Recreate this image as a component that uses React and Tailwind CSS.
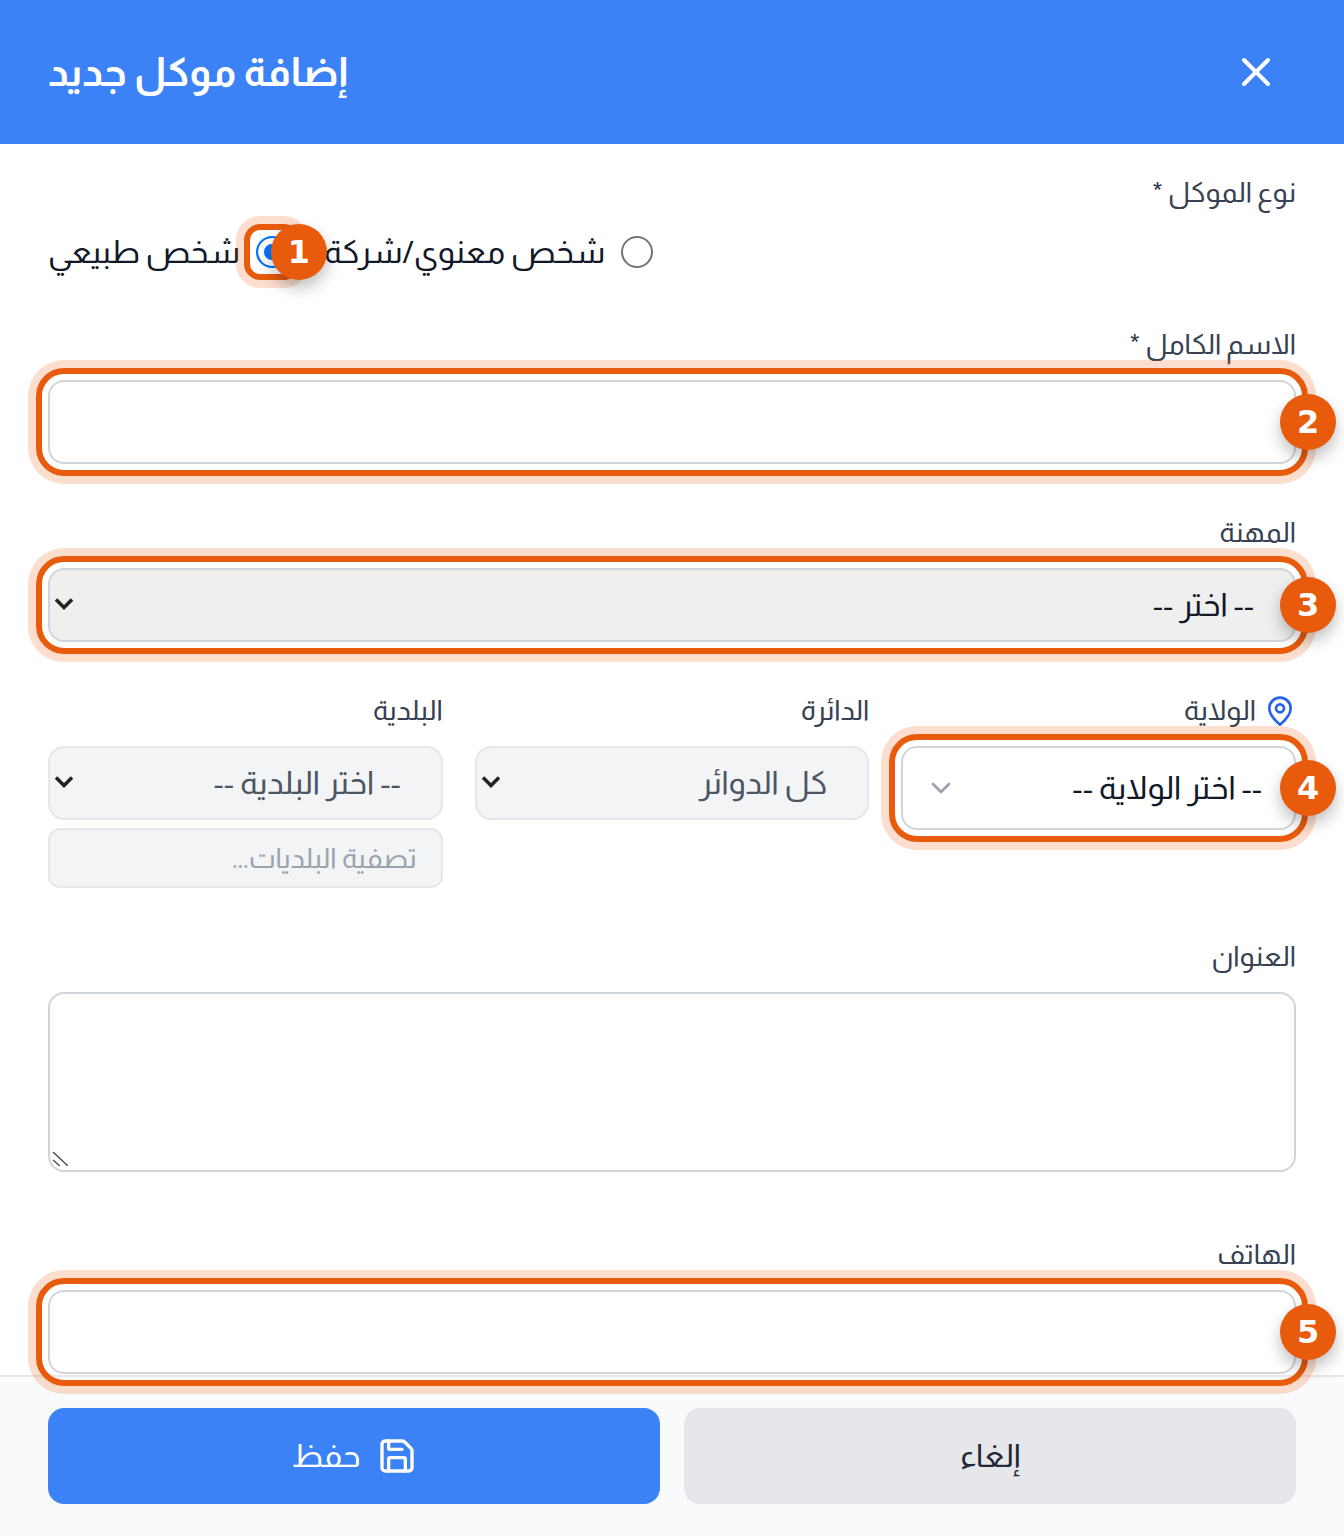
import React from 'react';
import { X, MapPin, Save, ChevronDown } from 'lucide-react';

const Badge = ({ n, className }) => (
    <span className={`absolute z-10 flex h-14 w-14 items-center justify-center rounded-full bg-[#e85b0c] font-['DejaVu_Sans',sans-serif] text-[32px] font-bold text-white shadow-[0_8px_16px_rgba(0,0,0,0.25)] ${className}`}>
        {n}
    </span>
);

// orange tutorial frame drawn over a field, with its numbered badge
const Frame = ({ n }) => (
    <div className="pointer-events-none absolute -inset-3 rounded-[28px] border-[6px] border-[#e85b0c] shadow-[0_0_0_8px_rgba(234,88,12,0.2)]">
        <Badge n={n} className="-right-[34px] top-1/2 -translate-y-1/2" />
    </div>
);

const Label = ({ children, className = '' }) => (
    <label className={`block text-[28px] leading-[40px] text-[#374151] ${className}`}>{children}</label>
);

// native looking select, arrow sits on the left because the page is rtl
const Select = ({ label, className }) => (
    <div className="relative">
        <select className={`block w-full appearance-none rounded-[16px] border-2 text-[32px] ${className}`}>
            <option>{label}</option>
        </select>
        <svg viewBox="0 0 20 14" className="pointer-events-none absolute left-[6px] top-1/2 h-[14px] w-5 -translate-y-[60%] fill-none stroke-[#222] stroke-[3.5]">
            <polyline points="2,3 10,11 18,3" />
        </svg>
    </div>
);

const Radio = ({ checked }) => (
    <input
        type="radio"
        name="kind"
        defaultChecked={checked}
        className="m-0 block h-8 w-8 appearance-none rounded-full border-2 border-[#767676] bg-white checked:border-[#0075ff] checked:bg-[#0075ff] checked:shadow-[inset_0_0_0_6px_white]"
    />
);

const App = () => {
    return (
        <div dir="rtl" className="flex h-[1536px] w-[1344px] flex-col overflow-hidden bg-white font-[Almarai,sans-serif]">
            <header dir="ltr" className="flex h-[144px] shrink-0 items-center justify-between bg-[#3b82f6] pl-12 pr-16 text-white">
                <h2 dir="rtl" className="text-[40px] font-bold">إضافة موكل جديد</h2>
                <X size={48} strokeWidth={2} />
            </header>

            <main className="relative h-[1231px] shrink-0 px-12">
                <Label className="mt-[29px]">نوع الموكل *</Label>
                <div className="mt-[15px] flex h-12 items-center justify-end text-[32px] text-[#111827]">
                    <div className="flex items-center gap-4">
                        <Radio />
                        <span>شخص معنوي/شركة</span>
                    </div>
                    <div className="mr-9 flex items-center gap-4">
                        <div className="relative">
                            <Radio checked />
                            <div className="pointer-events-none absolute -inset-3 rounded-[16px] border-[6px] border-[#e85b0c] shadow-[0_0_0_8px_rgba(234,88,12,0.2)]" />
                            <Badge n="1" className="left-[15px] top-1/2 -translate-y-1/2" />
                        </div>
                        <span>شخص طبيعي</span>
                    </div>
                </div>

                <Label className="mt-[49px]">الاسم الكامل *</Label>
                <div className="relative mt-[15px]">
                    <input className="block h-[84px] w-full rounded-[16px] border-2 border-[#d1d5db] bg-white" />
                    <Frame n="2" />
                </div>

                <Label className="mt-[49px]">المهنة</Label>
                <div className="relative mt-[15px]">
                    <Select label="-- اختر --" className="h-[74px] border-[#d1d5db] bg-[#efefef] pr-[40px] text-[#111827]" />
                    <Frame n="3" />
                </div>

                <div className="mt-[49px] grid grid-cols-3 items-start gap-8">
                    <div>
                        <Label className="flex items-center gap-2">
                            <MapPin size={32} className="text-[#2563eb]" />
                            الولاية
                        </Label>
                        <div className="relative mt-[15px]">
                            <div className="flex h-[84px] items-center justify-between rounded-[16px] border-2 border-[#d1d5db] bg-white pl-[22px] pr-8 text-[32px] text-[#111827]">
                                <span>-- اختر الولاية --</span>
                                <ChevronDown size={32} className="text-[#9ca3af]" />
                            </div>
                            <Frame n="4" />
                        </div>
                    </div>
                    <div>
                        <Label>الدائرة</Label>
                        <div className="mt-[15px]">
                            <Select label="كل الدوائر" className="h-[74px] border-[#e5e7eb] bg-[#f3f4f6] pr-[40px] text-[#4b5563]" />
                        </div>
                    </div>
                    <div>
                        <Label>البلدية</Label>
                        <div className="mt-[15px]">
                            <Select label="-- اختر البلدية --" className="h-[74px] border-[#e5e7eb] bg-[#f3f4f6] pr-[40px] text-[#4b5563]" />
                        </div>
                        <input
                            placeholder="تصفية البلديات..."
                            className="mt-2 block h-[60px] w-full rounded-[12px] border-2 border-[#e5e7eb] bg-[#f3f4f6] px-6 text-[28px] placeholder:text-[#9ca3af]"
                        />
                    </div>
                </div>

                <Label className="mt-[49px]">العنوان</Label>
                <div className="relative mt-[15px]">
                    <textarea className="block h-[180px] w-full resize-none rounded-[16px] border-2 border-[#d1d5db] bg-white" />
                    <svg viewBox="0 0 16 14" className="pointer-events-none absolute bottom-[6px] left-[4px] h-[14px] w-4 fill-none stroke-[#555] stroke-[1.5]">
                        <path d="M1 0 L16 14 M1 8 L8 14" />
                    </svg>
                </div>

                <Label className="mt-[63px]">الهاتف</Label>
                <div className="relative z-10 mt-[15px]">
                    <input className="block h-[84px] w-full rounded-[16px] border-2 border-[#d1d5db] bg-white" />
                    <Frame n="5" />
                </div>
            </main>

            <footer className="flex h-[161px] shrink-0 gap-6 border-t-2 border-[#e5e7eb] bg-[#f9fafb] px-12 pt-[31px]">
                <button className="flex h-24 flex-1 items-center justify-center rounded-[16px] bg-[#e5e7eb] text-[32px] text-[#1f2937]">إلغاء</button>
                <button className="flex h-24 flex-1 items-center justify-center gap-4 rounded-[16px] bg-[#3b82f6] text-[32px] text-white">
                    <Save size={40} />
                    حفظ
                </button>
            </footer>
        </div>
    );
};

export default App;
